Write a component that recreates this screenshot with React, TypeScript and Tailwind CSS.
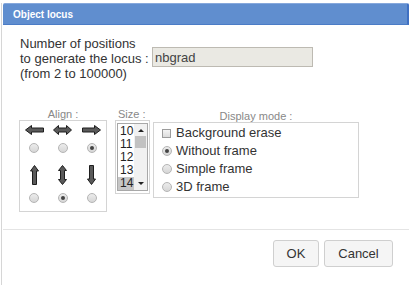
import React from 'react';

const font = { fontFamily: '"Liberation Sans", Arial, sans-serif' };

const Radio = ({ on }: { on?: boolean }) => (
  <span className="flex h-[10px] w-[10px] items-center justify-center rounded-full border border-[#b4b4b4] bg-gradient-to-b from-[#ececec] to-[#d6d6d6]">
    {on && <span className="h-[4px] w-[4px] rounded-full bg-[#444]" />}
  </span>
);

const Arrow = ({ d, w, h }: { d: string; w: number; h: number }) => (
  <svg width={w} height={h} viewBox={`0 0 ${w} ${h}`}>
    <path d={d} fill="#5a5a5a" stroke="#1e1e1e" strokeWidth="1" />
  </svg>
);

const arrows = {
  left: 'M0.5 5 L6.5 0.5 V3 H18.5 V7 H6.5 V9.5 Z',
  both: 'M0.5 5 L5.5 0.5 V3 H13.5 V0.5 L18.5 5 L13.5 9.5 V7 H5.5 V9.5 Z',
  right: 'M18.5 5 L12.5 0.5 V3 H0.5 V7 H12.5 V9.5 Z',
  up: 'M4.5 0.5 L8.5 6 H6.5 V19.5 H2.5 V6 H0.5 Z',
  updown: 'M4.5 0.5 L8.5 5.5 H6.5 V14.5 H8.5 L4.5 19.5 L0.5 14.5 H2.5 V5.5 H0.5 Z',
  down: 'M4.5 19.5 L8.5 14 H6.5 V0.5 H2.5 V14 H0.5 Z',
};

export default function App() {
  const sizes = ['10', '11', '12', '13', '14'];

  return (
    <div className="h-[285px] w-[412px] bg-white text-[#333]" style={font}>
      <div className="ml-[1px] h-[284px] w-[411px] border-b border-l border-[#d6d6d6]">
        {/* title bar */}
        <div className="ml-[1px] mt-[3px] flex h-[22px] w-[406px] items-center rounded-t-[2px] border-t border-r-2 border-b border-t-[#86a8dc] border-r-[#3f70c2] border-b-[#4b7cc6] bg-[#608ecf] pl-[10px] text-[10px] font-bold text-white">
          Object locus
        </div>

        {/* number of positions */}
        <div className="mt-[11px] flex pl-[18px] text-[13px] leading-[15px]">
          <div className="w-[132px] whitespace-nowrap">
            Number of positions
            <br />
            to generate the locus :
            <br />
            (from 2 to 100000)
          </div>
          <div className="mt-[11px] flex h-[20px] w-[161px] items-center border border-[#bdbab2] bg-[#eae9e3] pl-[2px] text-[#444]">
            nbgrad
          </div>
        </div>

        {/* options */}
        <div className="mt-[27px] flex pl-[17px] text-[11px] text-[#888]">
          <div className="w-[88px]">
            <div className="h-[12px] text-center leading-[12px]">Align :</div>
            <div className="grid h-[92px] grid-cols-3 grid-rows-[18px_18px_36px_10px] border border-[#d4d4d4]">
              <div className="flex items-center justify-center">
                <Arrow d={arrows.left} w={19} h={10} />
              </div>
              <div className="flex items-center justify-center">
                <Arrow d={arrows.both} w={19} h={10} />
              </div>
              <div className="flex items-center justify-center">
                <Arrow d={arrows.right} w={19} h={10} />
              </div>
              <div className="flex items-center justify-center"><Radio /></div>
              <div className="flex items-center justify-center"><Radio /></div>
              <div className="flex items-center justify-center"><Radio on /></div>
              <div className="flex items-center justify-center">
                <Arrow d={arrows.up} w={9} h={20} />
              </div>
              <div className="flex items-center justify-center">
                <Arrow d={arrows.updown} w={9} h={20} />
              </div>
              <div className="flex items-center justify-center">
                <Arrow d={arrows.down} w={9} h={20} />
              </div>
              <div className="flex items-center justify-center"><Radio /></div>
              <div className="flex items-center justify-center"><Radio on /></div>
              <div className="flex items-center justify-center"><Radio /></div>
            </div>
          </div>

          <div className="ml-[8px] w-[35px]">
            <div className="h-[12px] pl-[3px] leading-[12px]">Size :</div>
            <div className="h-[74px] border border-[#d4d4d4] px-[1px] pt-[2px]">
              <div className="flex h-[68px] border border-[#a8a8a8] bg-white text-[12px] text-[#222]">
                <div className="w-[17px] pt-[1px]">
                  {sizes.map((s) => (
                    <div
                      key={s}
                      className={`h-[13px] pl-[2px] leading-[13px] ${s === '14' ? 'bg-[#c6c6c6]' : ''}`}
                    >
                      {s}
                    </div>
                  ))}
                </div>
                <div className="flex w-[13px] flex-col items-center bg-[#f1f1f1]">
                  <div className="mt-[5px] h-0 w-0 border-x-[3px] border-b-[3px] border-x-transparent border-b-[#222]" />
                  <div className="mt-[4px] h-[12px] w-[11px] bg-[#c2c2c2]" />
                  <div className="mt-auto mb-[5px] h-0 w-0 border-x-[3px] border-t-[3px] border-x-transparent border-t-[#222]" />
                </div>
              </div>
            </div>
          </div>

          <div className="ml-[3px] mt-[2px] w-[206px]">
            <div className="h-[12px] text-center leading-[12px]">Display mode :</div>
            <div className="h-[76px] border border-[#d4d4d4] pt-[1px] text-[13px] text-[#333]">
              <div className="flex h-[18px] items-center pl-[8px]">
                <span className="mr-[5px] h-[9px] w-[9px] border border-[#9c9c9c] bg-gradient-to-b from-[#f4f4f4] to-[#dcdcdc]" />
                Background erase
              </div>
              <div className="flex h-[18px] items-center gap-[4px] pl-[8px]">
                <Radio on />
                Without frame
              </div>
              <div className="flex h-[18px] items-center gap-[4px] pl-[8px]">
                <Radio />
                Simple frame
              </div>
              <div className="flex h-[18px] items-center gap-[4px] pl-[8px]">
                <Radio />
                3D frame
              </div>
            </div>
          </div>
        </div>

        {/* separator */}
        <div className="ml-[1px] mt-[17px] h-px w-[406px] bg-[#e4e4e4]" />

        {/* buttons */}
        <div className="mt-[10px] flex justify-end gap-[5px] pr-[19px] text-[13px] text-[#333]">
          <button className="h-[27px] w-[46px] rounded-[3px] border border-[#cfcfcf] bg-[#f5f5f5]">OK</button>
          <button className="h-[27px] w-[69px] rounded-[3px] border border-[#cfcfcf] bg-[#f5f5f5]">Cancel</button>
        </div>
      </div>
    </div>
  );
}
